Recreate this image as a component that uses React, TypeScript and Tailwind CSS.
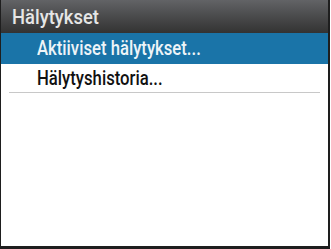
import React from 'react';

const items = [
  { label: 'Aktiiviset hälytykset...', active: true },
  { label: 'Hälytyshistoria...', active: false },
];

export default function App() {
  return (
    <div className="h-[249px] w-[331px] bg-white">
      <div
        className="flex h-[249px] w-[330px] flex-col border-b-[3px] border-l border-r-2 border-[#1e1e1e] bg-white"
        style={{ fontFamily: 'Roboto, "Liberation Sans", sans-serif' }}
      >
        {/* Header */}
        <div className="flex h-[33px] items-center bg-gradient-to-b from-[#626366] to-[#333333] pl-[11px]">
          <span className="inline-block origin-left scale-x-[0.92] text-[20px] font-medium leading-none text-[#e6e6e6]">
            Hälytykset
          </span>
        </div>

        {/* Menu */}
        <div className="flex flex-col">
          {items.map((item) => (
            <div
              key={item.label}
              className={
                item.active
                  ? 'flex h-[31px] items-center bg-[#1a74a8] pl-[36px]'
                  : 'mx-[8px] flex h-[29px] items-center border-b border-[#c8c8c8] pl-[28px]'
              }
            >
              <span
                className={
                  item.active
                    ? 'inline-block origin-left scale-x-[0.795] text-[21px] font-medium leading-none text-[#eef4f8]'
                    : 'inline-block origin-left scale-x-[0.795] text-[21px] font-medium leading-none text-[#111]'
                }
              >
                {item.label}
              </span>
            </div>
          ))}
        </div>
      </div>
    </div>
  );
}
